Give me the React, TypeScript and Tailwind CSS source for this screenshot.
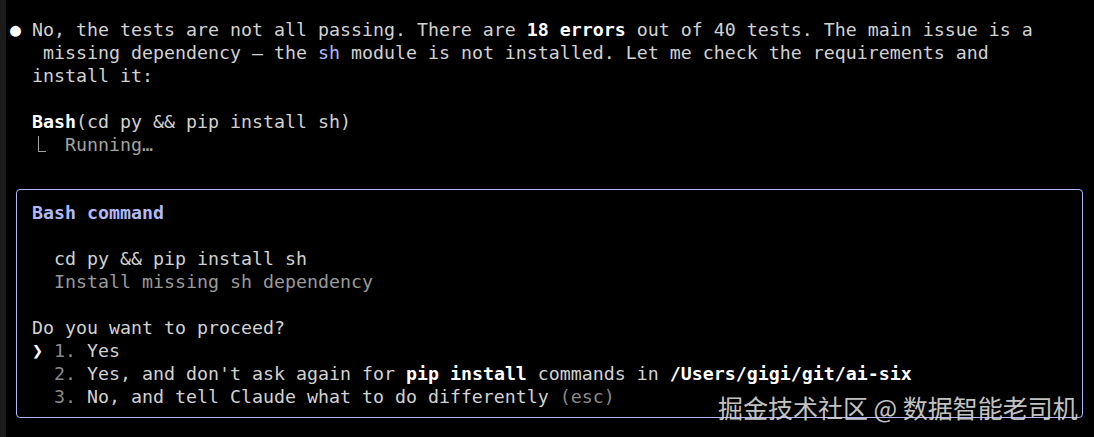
import React from "react";

const mono = "font-['DejaVu_Sans_Mono',_'Liberation_Mono',_monospace]";

function Line({ children }: { children?: React.ReactNode }) {
  return <div className="h-[23px] leading-[23px] whitespace-pre">{children ?? " "}</div>;
}

export default function App() {
  return (
    <div className="relative flex w-[1094px] h-[437px] bg-black overflow-hidden">
      <div className="w-[6px] h-full bg-[#1b1b1b]" />
      <div className={`flex-1 pl-[4px] pt-[18px] text-[18.27px] text-[#d2d2d2] ${mono}`}>
        <Line>
          <span className="text-white">●</span>
          {" No, the tests are not all passing. There are "}
          <span className="font-bold text-white">18 errors</span>
          {" out of 40 tests. The main issue is a"}
        </Line>
        <Line>
          {"   missing dependency – the "}
          <span className="text-[#b1b9f9]">sh</span>
          {" module is not installed. Let me check the requirements and"}
        </Line>
        <Line>{"  install it:"}</Line>
        <Line />
        <Line>
          {"  "}
          <span className="font-bold text-white">Bash</span>
          {"(cd py && pip install sh)"}
        </Line>
        <Line>
          <span className="text-[#a3a3a3]">
            {"  "}
            <span className="inline-block align-top w-[11px] h-[23px] pt-[3px] pl-[6px]">
              <span className="block h-[16px] w-[8px] border-l border-b border-[#a3a3a3]" />
            </span>
            {"  Running…"}
          </span>
        </Line>
        <div className="mt-[33px] ml-[6px] w-[1067px] border border-[#b1b9f9] rounded-[4px] pl-[15px] pt-[11px] pb-[9px]">
          <Line>
            <span className="font-bold text-[#b1b9f9]">Bash command</span>
          </Line>
          <Line />
          <Line>{"  cd py && pip install sh"}</Line>
          <Line>
            <span className="text-[#9a9a9a]">{"  Install missing sh dependency"}</span>
          </Line>
          <Line />
          <Line>Do you want to proceed?</Line>
          <Line>
            <span className="text-white">❯</span>
            <span className="text-[#8a8a8a]">{" 1. "}</span>
            Yes
          </Line>
          <Line>
            <span className="text-[#8a8a8a]">{"  2. "}</span>
            {"Yes, and don't ask again for "}
            <span className="font-bold text-white">pip install</span>
            {" commands in "}
            <span className="font-bold text-white">/Users/gigi/git/ai-six</span>
          </Line>
          <Line>
            <span className="text-[#8a8a8a]">{"  3. "}</span>
            {"No, and tell Claude what to do differently "}
            <span className="text-[#8a8a8a]">(esc)</span>
          </Line>
        </div>
      </div>
      <div className="absolute left-[718px] top-[390px] text-[25px] leading-[34px] whitespace-pre text-[#d8d8d8] opacity-90 font-['Noto_Sans_CJK_SC',_sans-serif]">
        掘金技术社区 @ 数据智能老司机
      </div>
    </div>
  );
}
